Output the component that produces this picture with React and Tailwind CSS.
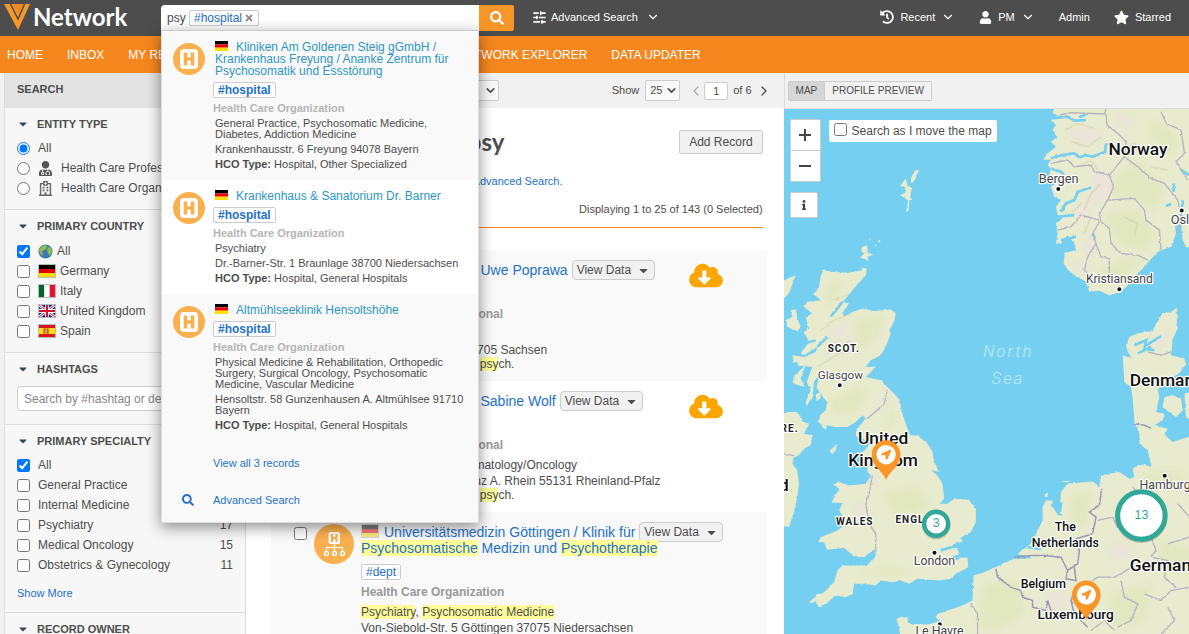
import { FaSearch, FaHistory, FaUser, FaStar, FaCloudDownloadAlt, FaTimes, FaCaretDown, FaInfo, FaUserMd, FaRegHospital, FaLocationArrow } from 'react-icons/fa'
import { ChevronDown, ChevronLeft, ChevronRight, SlidersHorizontal } from 'lucide-react'

const navItems = ['HOME', 'INBOX', 'MY REQUESTS', 'REPORTS', 'SOURCE SYSTEMS', 'NETWORK EXPLORER', 'DATA UPDATER']

const countries = [
  { name: 'All', flag: 'globe', checked: true },
  { name: 'Germany', flag: 'de' },
  { name: 'Italy', flag: 'it' },
  { name: 'United Kingdom', flag: 'gb' },
  { name: 'Spain', flag: 'es' },
]

const specialties = [
  { name: 'All', checked: true },
  { name: 'General Practice', count: 32 },
  { name: 'Internal Medicine', count: 21 },
  { name: 'Psychiatry', count: 17 },
  { name: 'Medical Oncology', count: 15 },
  { name: 'Obstetrics & Gynecology', count: 11 },
]

const suggestions = [
  {
    title: 'Kliniken Am Goldenen Steig gGmbH / Krankenhaus Freyung / Ananke Zentrum für Psychosomatik und Essstörung',
    specialty: 'General Practice, Psychosomatic Medicine, Diabetes, Addiction Medicine',
    address: 'Krankenhausstr. 6 Freyung 94078 Bayern',
    type: 'Hospital, Other Specialized',
    bg: 'bg-[#f9f9f9]',
  },
  {
    title: 'Krankenhaus & Sanatorium Dr. Barner',
    specialty: 'Psychiatry',
    address: 'Dr.-Barner-Str. 1 Braunlage 38700 Niedersachsen',
    type: 'Hospital, General Hospitals',
    bg: 'bg-white',
  },
  {
    title: 'Altmühlseeklinik Hensoltshöhe',
    specialty: 'Physical Medicine & Rehabilitation, Orthopedic Surgery, Surgical Oncology, Psychosomatic Medicine, Vascular Medicine',
    address: 'Hensoltstr. 58 Gunzenhausen A. Altmühlsee 91710 Bayern',
    type: 'Hospital, General Hospitals',
    bg: 'bg-[#f9f9f9]',
  },
]

export default function App() {
  return (
    <div className="flex h-screen flex-col overflow-hidden bg-white font-['Liberation_Sans',Arial,sans-serif] text-xs text-[#4d4d4d]">
      <TopBar />
      <nav className="flex h-[37px] shrink-0 items-center gap-6 bg-[#f6871f] px-[7px] whitespace-nowrap text-white">
        {navItems.map((n) => <a key={n} href="#">{n}</a>)}
      </nav>
      <div className="flex min-h-0 flex-1">
        <Sidebar />
        <Results />
        <MapPanel />
      </div>
    </div>
  )
}

function TopBar() {
  return (
    <header className="relative z-20 flex h-9 shrink-0 items-center bg-[#4d4d4d] pb-0.5 text-[11px] text-white">
      <a href="#" className="flex w-[161px] shrink-0 items-center gap-px pl-1">
        <svg width="28" height="28" viewBox="0 0 28 28" aria-hidden="true">
          <path d="M0 1h26L14 27z" fill="#f89728" />
          <path d="M6 0L14 16L21 0" fill="none" stroke="#4d4d4d" strokeWidth="1.500" />
          <path d="M8.500 1h10.500L14 12z" fill="#ee8a20" />
        </svg>
        <span className="font-['Lato',sans-serif] text-2xl leading-7 font-bold">Network</span>
      </a>
      <SearchBox />
      <button className="ml-[18px] flex items-center gap-1">
        <SlidersHorizontal size={15} strokeWidth={2.5} />
        Advanced Search
        <ChevronDown size={14} className="ml-1" />
      </button>
      <div className="ml-auto flex items-center gap-6 pr-[18px]">
        <button className="flex items-center gap-1.5">
          <FaHistory size={14} />
          Recent
          <ChevronDown size={14} />
        </button>
        <button className="flex items-center gap-1.5">
          <FaUser size={13} />
          PM
          <ChevronDown size={14} />
        </button>
        <a href="#">Admin</a>
        <a href="#" className="flex items-center gap-1.5">
          <FaStar size={15} />
          Starred
        </a>
      </div>
    </header>
  )
}

function SearchBox() {
  return (
    <div className="relative mt-[5px] flex h-[25px] w-[353px] shrink-0 self-start">
      <div className="flex flex-1 items-center rounded-tl-sm bg-white pl-1.5">
        <input aria-label="Search" defaultValue="psy" className="w-[22px] text-xs text-[#4d4d4d] outline-none" />
        <span className="flex h-4 items-center gap-0.5 rounded-xs border border-[#ccc] px-1 text-xs text-[#2571c8]">
          #hospital
          <button aria-label="Remove #hospital" className="text-[#888]"><FaTimes size={10} /></button>
        </span>
      </div>
      <button aria-label="Search" className="flex h-[26px] w-[35px] items-center justify-center rounded-r-xs bg-[#f89728]">
        <FaSearch size={14} />
      </button>
      <Suggestions />
    </div>
  )
}

function Suggestions() {
  return (
    <div className="absolute top-full right-[35px] left-0 border-x border-b border-[#ddd] bg-[#f9f9f9] text-[#4d4d4d] shadow-[0_4px_14px_rgba(0,0,0,0.45)]">
      <div className="border-t border-[#ccc]">
        {suggestions.map((s) => (
          <div key={s.title} className={`flex py-2.5 pr-1.5 pl-[11px] text-[11px] leading-[11px] ${s.bg}`}>
            <HospitalIcon />
            <div className="ml-2 min-w-0 flex-1">
              <a href="#" className="block pl-0.5 text-xs leading-3 text-[#2e96c4]">
                <span className="mr-2 inline-block"><Flag code="de" small /></span>
                {s.title}
              </a>
              <Tag bold>#hospital</Tag>
              <div className="mt-[5px] font-bold text-[#b5b5b5]">Health Care Organization</div>
              <div className="mt-1 pl-0.5">{s.specialty}</div>
              <div className="mt-1 pl-0.5">{s.address}</div>
              <div className="mt-1 pl-0.5"><b>HCO Type:</b> {s.type}</div>
            </div>
          </div>
        ))}
      </div>
      <a href="#" className="mt-3.5 ml-[51px] block leading-4 text-[#2571c8]">View all 3 records</a>
      <a href="#" className="mt-[21px] mb-3.5 flex items-center leading-4 text-[#2571c8]">
        <span className="flex w-[51px] justify-center"><FaSearch size={12} /></span>
        Advanced Search
      </a>
    </div>
  )
}

function Tag({ bold, children }) {
  return (
    <div className={bold ? 'mt-[5px] flex' : 'flex'}>
      <a href="#" className={`flex h-4 items-center rounded-xs border border-[#ccc] bg-white px-1 text-xs text-[#2571c8] ${bold ? 'font-bold' : ''}`}>
        {children}
      </a>
    </div>
  )
}

function HospitalIcon() {
  return (
    <svg className="mt-0.5 shrink-0" width="32" height="32" viewBox="0 0 32 32" aria-hidden="true">
      <circle cx="16" cy="16" r="16" fill="#fbb04f" />
      <rect x="7" y="6" width="18" height="20" rx="4" fill="#fff" />
      <path d="M12.500 9.500v13M19.500 9.500v13M12 16h8" stroke="#fbb04f" strokeWidth="3.600" />
    </svg>
  )
}

function DeptIcon() {
  return (
    <svg className="shrink-0" width="40" height="40" viewBox="0 0 40 40" aria-hidden="true">
      <circle cx="20" cy="20" r="20" fill="#fbb04f" />
      <rect x="14.500" y="8" width="11.500" height="12" rx="2" fill="#fff" />
      <path d="M18 10v8M22.500 10v8M18 14h5" stroke="#fbb04f" strokeWidth="2.200" />
      <path d="M20.500 20v7M12.500 27.500v-4h16v4" fill="none" stroke="#fff" strokeWidth="1.200" />
      <g fill="none" stroke="#fff" strokeWidth="1.300">
        <circle cx="12.500" cy="29.500" r="2" />
        <circle cx="20.500" cy="29.500" r="2" />
        <circle cx="28.500" cy="29.500" r="2" />
      </g>
    </svg>
  )
}

function Flag({ code, small }) {
  if (code === 'globe') {
    return (
      <svg width="15" height="15" viewBox="0 0 15 15" aria-hidden="true">
        <circle cx="7.500" cy="7.500" r="7" fill="#3f78b5" />
        <path d="M2 4q3-3.500 6-3l1 2-2 3-3 1 1 3-1 2-2-3-1-3zM10 3l3 1 1 4-2 4-2-3-1-3z" fill="#8cbf4a" />
      </svg>
    )
  }
  return (
    <svg className={small ? 'h-2.5 w-[13px]' : 'h-3.5 w-[18px] border border-[#bbb]'} viewBox="0 0 18 12" preserveAspectRatio="none" aria-hidden="true">
      {code === 'de' && <><path d="M0 0h18v4H0z" fill="#000" /><path d="M0 4h18v4H0z" fill="#e80000" /><path d="M0 8h18v4H0z" fill="#ffdd00" /></>}
      {code === 'it' && <><path d="M0 0h6v12H0z" fill="#00652e" /><path d="M6 0h6v12H6z" fill="#fff" /><path d="M12 0h6v12h-6z" fill="#e8112d" /></>}
      {code === 'gb' && (
        <>
          <path d="M0 0h18v12H0z" fill="#00247d" />
          <path d="M0 0l18 12M18 0L0 12" stroke="#fff" strokeWidth="2.800" />
          <path d="M0 0l18 12M18 0L0 12" stroke="#cf142b" strokeWidth="1" />
          <path d="M9 0v12M0 6h18" stroke="#fff" strokeWidth="4" />
          <path d="M9 0v12M0 6h18" stroke="#cf142b" strokeWidth="2.200" />
        </>
      )}
      {code === 'es' && <><path d="M0 0h18v12H0z" fill="#d8141c" /><path d="M0 3h18v6H0z" fill="#fde000" /><path d="M5 3.500h6v5H5z" fill="#c0552c" /><path d="M7 4.500h2v3H7z" fill="#e9b48a" /></>}
    </svg>
  )
}

function Section({ title, children }) {
  return (
    <section className="border-b border-[#ddd] px-3 pt-1.5">
      <h2 className="mb-1 flex h-5 items-center gap-2 text-[11px] font-bold">
        <FaCaretDown size={12} className="text-[#34495e]" />
        {title}
      </h2>
      {children}
    </section>
  )
}

const box = 'size-[13px] shrink-0 accent-[#0075ff]'

function Sidebar() {
  return (
    <aside className="w-[246px] shrink-0 overflow-hidden bg-[#f1f1f1] pl-1">
      <div className="border-x border-[#ddd] bg-[#f7f7f7]">
        <h1 className="flex h-[35px] items-center bg-[#e3e3e3] px-3 pb-0.5 text-[11px] font-bold">SEARCH</h1>
        <Section title="ENTITY TYPE">
          <div className="pb-[11px] whitespace-nowrap">
            <label className="flex h-5 items-center gap-2">
              <input type="radio" name="entity" defaultChecked className={box} />
              All
            </label>
            <label className="flex h-5 items-center gap-2">
              <input type="radio" name="entity" className={box} />
              <FaUserMd size={15} color="#555" />
              Health Care Professional
            </label>
            <label className="flex h-5 items-center gap-2">
              <input type="radio" name="entity" className={box} />
              <FaRegHospital size={15} color="#666" />
              Health Care Organization
            </label>
          </div>
        </Section>
        <Section title="PRIMARY COUNTRY">
          <div className="pt-px pb-[11px]">
            {countries.map((c) => (
              <label key={c.name} className="flex h-5 items-center gap-2">
                <input type="checkbox" defaultChecked={c.checked} className={box} />
                <span className="flex items-center gap-1"><Flag code={c.flag} />{c.name}</span>
              </label>
            ))}
          </div>
        </Section>
        <Section title="HASHTAGS">
          <div className="pt-[3px] pb-[13px]">
            <input aria-label="Hashtags" placeholder="Search by #hashtag or description" className="block h-[25px] w-full rounded-sm border border-[#ccc] bg-white px-1.5 placeholder:text-[#888]" />
          </div>
        </Section>
        <Section title="PRIMARY SPECIALTY">
          {specialties.map((s) => (
            <label key={s.name} className="flex h-5 items-center gap-2">
              <input type="checkbox" defaultChecked={s.checked} className={box} />
              {s.name}
              <span className="ml-auto">{s.count}</span>
            </label>
          ))}
          <a href="#" className="mt-2 block pb-[9px] text-[11px] leading-5 text-[#2571c8]">Show More</a>
        </Section>
        <Section title="RECORD OWNER" />
      </div>
    </aside>
  )
}

function Select({ label, options, className }) {
  return (
    <span className="relative flex items-center">
      <select aria-label={label} className={`h-[21px] appearance-none rounded-xs border border-[#ccc] bg-[#f9f9f9] px-1 ${className}`}>
        {options.map((o) => <option key={o}>{o}</option>)}
      </select>
      <ChevronDown size={13} strokeWidth={3} className="pointer-events-none absolute right-0.5" />
    </span>
  )
}

function Mark({ children }) {
  return <mark className="bg-[#ffff99] text-inherit">{children}</mark>
}

function ViewData() {
  return (
    <button className="-my-0.5 flex h-5 shrink-0 items-center gap-1.5 rounded-sm border border-[#ccc] bg-[#f1f1f1] px-1">
      View Data
      <FaCaretDown size={13} />
    </button>
  )
}

function Card({ icon, title, titleRest, tag, kind, specialty, address, note, cloud, flagClass = '', bg }) {
  return (
    <article className={`flex items-start pt-3 pr-11 pb-[11px] pl-[23px] ${bg}`}>
      <input type="checkbox" aria-label="Select record" className="mt-[3px] size-[13px] shrink-0" />
      <div className="ml-[7px]">{icon}</div>
      <div className="ml-[7px] min-w-0 flex-1 leading-4">
        <div className="flex items-start gap-1">
          <a href="#" className="shrink-0 text-sm leading-4 text-[#2571c8]">
            <span className={`mr-[5px] inline-block align-top ${flagClass}`}><Flag code="de" /></span>
            {title}
          </a>
          <ViewData />
        </div>
        {titleRest && <a href="#" className="block text-sm leading-4 text-[#2571c8]">{titleRest}</a>}
        <div className="mt-2"><Tag>{tag}</Tag></div>
        <div className="mt-1 font-bold text-[#999]">{kind}</div>
        <div className="mt-1">{specialty}</div>
        <div>{address}</div>
        {note && <div className="leading-3">{note}</div>}
      </div>
      {cloud && <button aria-label="Download record" className="text-[#ffa500]"><FaCloudDownloadAlt className="h-[27px] w-[34px]" /></button>}
    </article>
  )
}

function Results() {
  return (
    <main className="min-w-0 flex-1 overflow-hidden">
      <div className="flex h-[35px] items-center bg-[#f1f1f1] pr-3 pl-[25px] text-[11px]">
        <Select label="Sort order" options={['Sort by relevance']} className="w-[228px]" />
        <label htmlFor="page" className="mr-1.5 ml-auto">Show</label>
        <Select label="Records per page" options={['25', '50', '100']} className="w-[35px]" />
        <button aria-label="Previous page" className="ml-2 text-[#aaa]"><ChevronLeft size={16} /></button>
        <input id="page" defaultValue="1" className="h-[18px] w-6 rounded-xs border border-[#ccc] bg-white text-center" />
        <span className="ml-[5px]">of 6</span>
        <button aria-label="Next page" className="ml-1"><ChevronRight size={16} /></button>
      </div>
      <div className="pr-[17px] pl-[25px]">
        <div className="pr-1">
          <div className="flex items-center justify-between pt-[22px]">
            <h1 className="font-['Lato',sans-serif] text-2xl leading-6 font-bold">Search Results for psy</h1>
            <button className="h-6 rounded-xs border border-[#ccc] bg-[#f1f1f1] px-[9px]">Add Record</button>
          </div>
          <p className="mt-[19px] text-[11px] leading-4">Looking for something specific? View the <a href="#" className="text-[#2571c8]">Advanced Search.</a></p>
          <p className="mt-3 border-b border-[#f6871f] pb-[10px] text-right text-[11px] leading-4">Displaying 1 to 25 of 143 (0 Selected)</p>
        </div>
        <div className="mt-[22px]">
          <Card
            icon={<DeptIcon />} title="Prof. Dr. Bernd Uwe Poprawa" tag="#psych" kind="Health Care Professional"
            specialty="Psychiatry" address="Hauptstr. 1 Leipzig 04705 Sachsen"
            note={<>Facharzt der Medizin, <Mark>psy</Mark>ch.</>} cloud bg="bg-[#f9f9f9]"
          />
          <Card
            icon={<DeptIcon />} title="Prof. Dr. Karen Sabine Wolf" tag="#onco" kind="Health Care Professional"
            specialty="Internal Medicine, Hematology/Oncology" address="Am Markt 4 Main Mainz A. Rhein 55131 Rheinland-Pfalz"
            note={<>Facharzt der Medizin, <Mark>psy</Mark>ch.</>} cloud bg="bg-white"
          />
          <Card
            icon={<DeptIcon />} flagClass="opacity-50"
            title="Universitätsmedizin Göttingen / Klinik für"
            titleRest={<><Mark>Psychosomatische</Mark> Medizin und <Mark>Psychotherapie</Mark></>}
            tag="#dept" kind="Health Care Organization"
            specialty={<><Mark>Psychiatry</Mark>, <Mark>Psychosomatic Medicine</Mark></>}
            address="Von-Siebold-Str. 5 Göttingen 37075 Niedersachsen" bg="bg-[#f9f9f9]"
          />
        </div>
      </div>
    </main>
  )
}

function MapPanel() {
  return (
    <section className="flex w-[34.1%] shrink-0 flex-col">
      <div className="flex h-9 shrink-0 items-center border-b border-l border-[#ddd] bg-[#f1f1f1] pl-[3px] text-[10px]">
        <button className="h-5 rounded-l-xs border border-[#ccc] bg-[#d6d6d6] px-[7px]">MAP</button>
        <button className="h-5 rounded-r-xs border border-l-0 border-[#ccc] px-[7px]">PROFILE PREVIEW</button>
      </div>
      <div className="relative min-h-0 flex-1 overflow-hidden bg-[#74cff0]">
        <RegionMap />
        <div className="absolute top-2.5 left-1.5 flex flex-col text-[#444]">
          <button aria-label="Zoom in" className="flex h-8 w-[31px] items-center justify-center rounded-t-xs border border-[#ccc] bg-white">
            <svg width="12" height="12" viewBox="0 0 12 12"><path d="M6 0v12M0 6h12" stroke="currentColor" strokeWidth="2" /></svg>
          </button>
          <button aria-label="Zoom out" className="flex h-[31px] w-[31px] items-center justify-center rounded-b-xs border border-t-0 border-[#ccc] bg-white">
            <svg width="12" height="12" viewBox="0 0 12 12"><path d="M0 6h12" stroke="currentColor" strokeWidth="2" /></svg>
          </button>
          <button aria-label="Map info" className="mt-2.5 flex h-[26px] w-7 items-center justify-center rounded-xs border border-[#ccc] bg-white">
            <FaInfo size={10} />
          </button>
        </div>
        <label className="absolute top-[11px] left-[45px] flex h-[22px] items-center gap-[5px] rounded-xs bg-white px-[5px] whitespace-nowrap">
          <input type="checkbox" className="mb-1 size-[13px]" />
          Search as I move the map
        </label>
      </div>
    </section>
  )
}

const labels = [
  // x, y (baseline), text, size, weight, anchor
  [1061, 165, 'Norway', 52, 500],
  [1036, 857, 'Denmark', 52, 500, 'start'],
  [297, 1031, 'United', 52, 500],
  [297, 1098, 'Kingdom', 52, 500],
  [1036, 1413, 'Germany', 52, 500, 'start'],
  [14, 1171, 'Ireland', 52, 500, 'end'],
  [843, 1292, 'The', 37, 500],
  [843, 1339, 'Netherlands', 37, 500],
  [777, 1463, 'Belgium', 37, 500],
  [874, 1556, 'Luxembourg', 41, 500],
  [823, 249, 'Bergen', 38, 400],
  [1159, 372, 'Oslo', 38, 400, 'start'],
  [1005, 549, 'Kristiansand', 36, 400],
  [169, 836, 'Glasgow', 35, 400],
  [1142, 1167, 'Hamburg', 37, 400],
  [451, 1394, 'London', 37, 400],
  [466, 1604, 'Le Havre', 37, 400],
]

const cities = [[822, 267], [1192, 331], [1005, 567], [167, 855], [1141, 1126], [451, 1357], [467, 1571]]

// One map unit is a third of a pixel
function RegionMap() {
  return (
    <svg className="absolute inset-0 h-full w-full font-['Roboto',sans-serif]" viewBox="0 27 1215 1575" preserveAspectRatio="xMinYMin slice" role="img" aria-label="Map of northern Europe">
      <defs>
        <filter id="coast" x="-5%" y="-5%" width="110%" height="110%">
          <feTurbulence type="fractalNoise" baseFrequency="0.09" numOctaves="3" seed="4" result="n" />
          <feDisplacementMap in="SourceGraphic" in2="n" scale="7" xChannelSelector="R" yChannelSelector="G" />
        </filter>
        <filter id="relief">
          <feGaussianBlur stdDeviation="9" />
        </filter>
      </defs>
      <g filter="url(#coast)">
        <g fill="#e8ebcd">
          <path d="M815 10L805 40L822 45L800 60L815 75L805 90L820 110L800 125L815 140L785 165L778 180L800 178L790 195L800 205L795 225L830 240L800 260L810 290L830 300L815 320L820 345L835 355L815 370L820 400L815 430L830 430L850 405L870 430L875 450L842 458L838 490L855 515L905 545L915 575L945 572L975 585L1010 575L1030 555L1065 515L1120 455L1160 440L1175 400L1172 380L1190 370L1195 420L1205 440L1240 445V10z" />
          <path d="M405 208L392 212L380 235L382 250L392 240zM365 235L348 257L362 262L364 278L347 285L365 295L372 302L366 335L373 332L376 300L386 300L378 290L383 262L370 256z" />
          <path d="M235 440L248 436L252 452L244 458L268 464L250 470L254 484L246 478L228 472L240 460L230 450zM283 420h5v6h-5zM268 436l8-3 2 5zM256 414h4v5h-4z" />
          <path d="M118 508L140 515L195 518L235 510L232 503L248 505L245 525L205 570L190 590L175 605L195 610L178 635L178 650L205 635L235 625L270 632L320 628L334 638L332 660L315 690L320 700L305 740L290 765L260 780L245 800L277 799L260 815L245 830L290 840L310 860L345 895L355 940L370 985L378 1005L400 1005L430 1030L445 1055L450 1085L465 1115L440 1108L460 1125L475 1150L480 1195L465 1210L490 1210L510 1195L555 1198L575 1225L575 1265L560 1295L530 1310L535 1325L515 1325L495 1345L520 1342L525 1360L500 1370L550 1372L552 1400L515 1420L500 1435L465 1440L400 1435L375 1450L350 1440L325 1445L290 1440L275 1455L235 1450L210 1450L205 1480L185 1490L155 1485L125 1510L105 1520L95 1505L75 1508L100 1480L115 1480L150 1445L160 1410L175 1395L245 1395L265 1380L275 1365L272 1345L240 1370L210 1368L180 1342L130 1348L120 1325L102 1325L110 1310L160 1290L180 1275L175 1245L165 1230L175 1208L142 1206L165 1165L145 1150L165 1145L195 1155L245 1150L262 1125L250 1115L250 1095L220 1060L240 1052L262 1025L218 1008L218 985L245 955L235 945L215 965L190 980L155 980L130 975L125 990L105 965L108 945L125 930L130 905L108 880L98 860L105 825L90 845L85 890L68 918L65 905L80 870L68 845L85 800L40 795L50 775L95 755L100 740L60 765L50 760L75 725L60 695L75 685L65 650L85 640L60 620L70 605L110 600L88 580L105 560L110 530z" />
          <path d="M5 660L25 650L20 630L36 628L40 655L50 680L40 692L10 680zM-10 545L35 525L15 580L-10 605zM32 825L65 795L50 835L62 860L30 850zM25 765L60 770L55 790L30 785zM95 882L108 877L110 892L98 903zM136 1052L160 1030L155 1050L145 1062z" />
          <path d="M-10 935L40 935L60 965L75 970L60 1000L85 1005L80 1035L60 1045L45 1065L28 1072L25 1090L40 1110L45 1150L40 1190L30 1235L15 1280L-10 1275z" />
          <path d="M1177 622L1178 690L1165 715L1160 765L1200 775L1205 790L1185 820L1165 830L1160 850L1130 855L1120 870L1125 890L1115 935L1140 940L1135 960L1110 975L1150 985L1140 1005L1165 1025L1240 1000V1620H350L345 1580L335 1552L370 1550L372 1570L430 1572L468 1562L455 1550L460 1540L535 1515L565 1500L568 1425L600 1415L690 1375L730 1375L700 1360L740 1330L755 1300L775 1260L775 1220L785 1200L805 1200L802 1215L820 1242L835 1245L826 1230L830 1175L850 1150L925 1143L945 1158L950 1125L1005 1115L1035 1135L1050 1130L1045 1105L1060 1095L1100 1092L1090 1050L1065 1030L1065 1000L1050 965L1045 895L1040 860L1020 845L1015 765L1045 775L1030 755L1025 735L1035 710L1060 700L1105 690L1120 660L1135 640L1160 635z" />
          <path d="M1140 890L1165 885L1190 895L1195 930L1175 950L1160 940L1135 920zM1200 880L1240 870V980L1205 950zM782 1178h8v12h-8zM835 1142h20v3h-20z" />
        </g>
        <g fill="#dfe6ba" opacity=".7" filter="url(#relief)">
          <path d="M1060 180L1140 260L1110 330L1040 290L980 300L990 240zM960 340L1060 330L1110 400L1080 450L1010 440L975 380zM1090 60L1150 80L1190 130L1160 170L1100 110zM1000 480L1080 480L1010 540L930 530z" />
          <path d="M140 545L190 545L150 590L120 630zM210 660L300 650L280 710L220 760zM140 900L220 860L250 880L210 940L150 935zM320 920L340 970L300 990zM300 1180L400 1160L440 1220L340 1250zM200 1415L320 1405L400 1415L330 1425z" />
          <path d="M600 1450L700 1440L720 1540L640 1590L580 1580zM860 1190L920 1180L900 1280L860 1260zM1120 1320L1215 1340V1420L1130 1400zM980 1480L1100 1450L1080 1560L990 1580zM1080 1120L1200 1120L1180 1170L1090 1150z" />
        </g>
        <g fill="#ece2dc" opacity=".8" filter="url(#relief)">
          <path d="M860 70L900 90L960 80L940 120L880 140L850 110zM920 205L975 230L985 270L930 320L905 300L930 250zM880 320L925 300L900 350L870 360zM860 480L900 490L925 530L880 510zM900 400L935 390L925 490L900 460zM1000 30L1050 60L1010 100z" />
          <path d="M150 680L200 655L180 710L130 735zM160 730L220 700L190 750L140 780zM262 1110L280 1130L275 1170L258 1150zM215 1200L240 1220L230 1270L205 1250zM285 900L315 880L305 930z" />
          <path d="M790 1480L850 1460L840 1530L790 1540zM970 1340L1030 1320L1050 1370L990 1380zM1110 700L1150 690L1145 735L1105 745z" />
        </g>
        <g fill="none" stroke="#cdd0a8" strokeWidth="4" opacity=".6">
          <path d="M845 90L880 70L930 85M860 125L910 140L950 110M880 200L920 180L940 210M900 330L920 280L950 250M860 340L890 310M920 350L900 400M1020 350L1060 370L1050 410M1010 150L1050 130L1080 160M1100 200L1150 210M110 690L150 660L200 640M130 760L200 720M100 800L180 750M200 580L150 600" />
        </g>
        <g fill="none" stroke="#74cff0" strokeWidth="8">
          <path d="M800 174L835 165L870 160L885 172L905 165L925 170L962 156L966 130" />
          <path d="M830 335L845 310L870 300L880 275L920 262M800 55L850 50L870 62L905 60M885 52L910 40M800 205L830 215L850 240M820 350L870 345M830 420L875 410M925 400L932 415M1168 250V275M1145 318L1160 312M1190 210L1215 225M1195 300L1190 350" />
          <path d="M175 605L140 650M100 740L130 710M60 730L95 720M1050 735L1085 720L1080 745L1110 750M1085 735L1130 708M1060 760L1100 740M800 1215L830 1210L825 1245M730 1340L770 1345M1050 1080L1100 1095M690 1365L740 1370M500 1340L470 1350M525 1372L495 1380" />
        </g>
        <g fill="none" stroke="#b5b3c4" strokeWidth="4">
          <path d="M825 45L860 38L960 42L965 28M965 42L968 75L1000 100L1025 125L1020 170L975 225L930 215L920 195L870 200L850 180L800 190M975 225L988 260L970 300L945 340L950 365L975 385L980 430L1010 460L1060 465L1090 480M970 300L1050 295L1080 330L1085 360L1125 390L1130 450M945 360L890 345L860 380L820 390M945 365L925 400L935 430L910 470L900 510L920 530M935 430L950 470L975 475L975 520M1020 170L1060 200L1100 235L1140 250L1180 300L1190 360M1130 35L1145 70L1190 90L1200 160L1175 185L1210 240M1190 360L1175 400" />
          <path d="M250 955L300 910L310 870M265 1125L255 1180L245 1210L255 1270L275 1300L275 1355M-5 1060L30 1066M1090 755L1130 765L1160 755" />
          <path d="M560 1510L580 1540L580 1600M940 1260L985 1250L1000 1280M1045 1160L1070 1190M1100 1310L1115 1350L1100 1370L1150 1380L1140 1430L1175 1460M905 1450L940 1430L990 1430L1010 1420L1040 1400M1150 1330L1215 1310M1180 1210L1215 1250M1010 1440L1020 1490L1060 1510L1040 1560L1000 1580M1080 1480L1130 1500L1160 1470L1215 1460M1150 1520L1170 1560L1130 1600M920 1590L960 1560L990 1590" />
        </g>
        <g fill="none" stroke="#9a98b4" strokeWidth="4.500">
          <path d="M952 1165L945 1215L915 1235L935 1250L925 1300L875 1315L885 1350L880 1390L850 1410L845 1435L875 1440L870 1400M690 1370L740 1365L780 1365L830 1370L850 1410M635 1405L640 1430L680 1460L710 1470L715 1490L745 1500L745 1520L785 1530L790 1500L800 1530L830 1550M870 1470L860 1500L870 1540L910 1580M1050 970L1080 975L1100 983" />
        </g>
      </g>
      <g fill="#111" stroke="#fff" strokeWidth="4">
        {cities.map(([x, y]) => <circle key={`${x}-${y}`} cx={x} cy={y} r="8" />)}
      </g>
      <g stroke="#fff" strokeWidth="7" strokeLinejoin="round" paintOrder="stroke">
        {labels.map(([x, y, text, size, weight, anchor = 'middle']) => (
          <text key={text} x={x} y={y} fontSize={size} fontWeight={weight} fill={weight === 500 ? '#111' : '#444'} textAnchor={anchor}>{text}</text>
        ))}
        <g fontSize="30" fontWeight="700" fill="#222" className="tracking-[3px]">
          <text x="131" y="756">SCOT.</text>
          <text x="-22" y="995">IRE.</text>
          <text x="156" y="1275">WALES</text>
          <text x="334" y="1269">ENGLAND</text>
        </g>
      </g>
      <g fontSize="50" fontStyle="italic" fontWeight="300" fill="#c3e8f7" className="tracking-[6px]">
        <text x="596" y="771">North</text>
        <text x="622" y="851">Sea</text>
      </g>
      <Pin x={306} y={1063} />
      <Pin x={906} y={1483} />
      <Cluster x={456} y={1270} r={36} ring={13} count={3} />
      <Cluster x={1071} y={1245} r={71} ring={15} count={13} />
    </svg>
  )
}

function Pin({ x, y }) {
  return (
    <g transform={`translate(${x} ${y})`}>
      <path d="M0 76C-8 50 -43 36 -43 0A43 43 0 0 1 43 0C43 36 8 50 0 76z" fill="#f89728" />
      <circle r="29" fill="#fff" />
      <FaLocationArrow x="-15" y="-15" size={30} color="#f89728" />
    </g>
  )
}

function Cluster({ x, y, r, ring, count }) {
  return (
    <g transform={`translate(${x} ${y})`}>
      <circle cy="4" r={r + ring / 2} fill="#000" opacity=".2" />
      <circle r={r} fill="#fff" stroke="#2fa898" strokeWidth={ring} />
      <text y="10" fontSize="37" textAnchor="middle" fill="#2fa898" className="font-['Liberation_Sans',sans-serif]">{count}</text>
    </g>
  )
}
